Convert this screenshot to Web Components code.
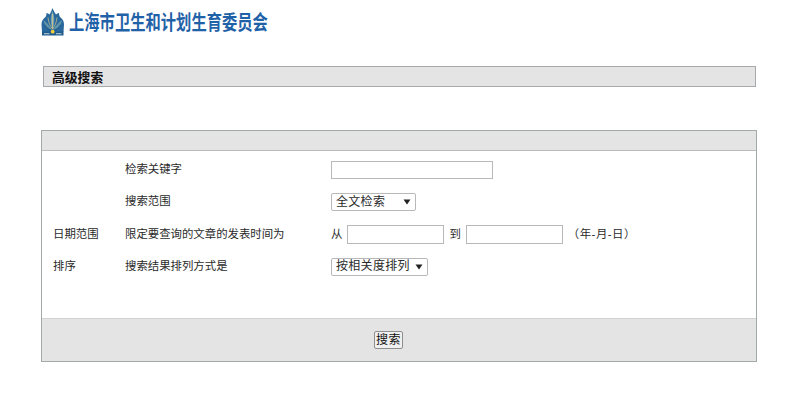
<!DOCTYPE html>
<html lang="zh">
<head>
<meta charset="utf-8">
<title>高级搜索</title>
<style>
  html, body {
    margin: 0;
    padding: 0;
    background: #fff;
    color: #2a2a2a;
    font: 11.4px/1.2 "Liberation Sans", "Noto Sans CJK SC", sans-serif;
  }
</style>
</head>
<body>
<site-header>上海市卫生和计划生育委员会</site-header>
<title-bar>高级搜索</title-bar>
<search-panel>
  <form-row desc="检索关键字"><text-box width="162" height="18"></text-box></form-row>
  <form-row desc="搜索范围"><drop-down width="85" gap="18">全文检索</drop-down></form-row>
  <form-row label="日期范围" desc="限定要查询的文章的发表时间为" row-height="33"><date-range></date-range></form-row>
  <form-row label="排序" desc="搜索结果排列方式是" row-height="31"><drop-down width="97" gap="5">按相关度排列</drop-down></form-row>
  <push-button slot="footer">搜索</push-button>
</search-panel>

<script>
class SiteHeader extends HTMLElement {
  constructor() {
    super();
    this.shadowDOM = this.attachShadow({mode: 'open'});
    this.shadowDOM.innerHTML = `
    <style>
      :host {
        display: flex;
        align-items: center;
        height: 44px;
        padding-left: 41px;
      }
      svg { display: block; width: 24px; height: 28px; flex: none; }
      .name {
        margin: 2px 0 0 4px;
        font-size: 20px;
        line-height: 26px;
        font-weight: 700;
        color: #1f62a8;
        white-space: nowrap;
        transform: scaleX(.765);
        transform-origin: left center;
      }
    </style>
    <svg viewBox="0 0 24 28" aria-hidden="true">
      <path d="M11.5 0 C12.5 3 14 5 15 6.5 C16 5.5 17 5 18 5 C18 7 18.5 8.5 19.5 9.5 C21.5 11 23 13 23 16.5 C23 19 22.5 21.5 22.5 24 L1 24 C1 21.5 0.5 19 0.5 16.5 C0.5 13 2 11 4 9.5 C5 8.5 5.5 7 5.5 5 C6.5 5 7.5 5.5 8.5 6.5 C9.5 5 10.5 3 11.5 0 Z" fill="#28689c"/>
      <path d="M11.5 3 C9.5 8 9 14 11.5 21 C14 14 13.5 8 11.5 3 Z" fill="#7aa6b4"/>
      <path d="M2.5 12 C3 17 6.5 21 11.5 22 C8 18 6 14.5 2.5 12 Z M21 12 C20.5 17 17 21 11.5 22 C15 18 17 14.5 21 12 Z" fill="#5f93a8"/>
      <path d="M11.5 6 V21 M7 9.5 C7.5 15 9.5 18.5 11.5 21 M16 9.5 C15.5 15 13.5 18.5 11.5 21" stroke="#d8c98a" stroke-width=".7" fill="none"/>
      <path d="M4 17 C6 21 9 22.5 11.5 22.5 C14 22.5 17 21 19.5 17" stroke="#1c4f80" stroke-width=".8" fill="none"/>
      <rect x="1" y="23.5" width="21.5" height="4" fill="#1f5c8e"/>
      <circle cx="11.7" cy="23.7" r="1.9" fill="#f0cd3c"/>
      <path d="M3 25.8 H8.5 M15 25.8 H20.5" stroke="#c3d3db" stroke-width="1.1"/>
    </svg>
    <div class="name"><slot></slot></div>
    `;
  }
}

class TitleBar extends HTMLElement {
  constructor() {
    super();
    this.shadowDOM = this.attachShadow({mode: 'open'});
    this.shadowDOM.innerHTML = `
    <style>
      :host {
        display: block;
        box-sizing: border-box;
        height: 21px;
        margin: 22px 44px 0 43px;
        padding: 2px 0 0 8px;
        background: #e4e4e4;
        border: 1px solid #a6aaad;
        font-size: 12.8px;
        line-height: 17px;
        font-weight: 700;
        color: #111;
      }
    </style>
    <slot></slot>
    `;
  }
}

class SearchPanel extends HTMLElement {
  constructor() {
    super();
    this.shadowDOM = this.attachShadow({mode: 'open'});
    this.shadowDOM.innerHTML = `
    <style>
      :host {
        display: block;
        box-sizing: border-box;
        margin: 43px 43px 0 41px;
        border: 1px solid #a3a8a8;
      }
      .head {
        height: 19px;
        background: #e4e4e4;
        border-bottom: 1px solid #b9bcbc;
      }
      .body {
        box-sizing: border-box;
        height: 167px;
        padding-top: 3px;
        background: #fff;
      }
      .foot {
        display: flex;
        justify-content: center;
        align-items: center;
        box-sizing: border-box;
        height: 43px;
        padding-right: 21px;
        background: #e4e4e4;
        border-top: 1px solid #d0d2d2;
      }
    </style>
    <div class="head"></div>
    <div class="body"><slot></slot></div>
    <div class="foot"><slot name="footer"></slot></div>
    `;
  }
}

class FormRow extends HTMLElement {
  constructor() {
    super();
    this.shadowDOM = this.attachShadow({mode: 'open'});
    const label = this.getAttribute('label') || '';
    const desc = this.getAttribute('desc') || '';
    const rowHeight = this.getAttribute('row-height') || 32;
    this.shadowDOM.innerHTML = `
    <style>
      :host {
        display: grid;
        grid-template-columns: 72px 206px 1fr;
        align-items: center;
        height: ${rowHeight}px;
        padding-left: 11px;
      }
      .field { display: flex; align-items: center; }
    </style>
    <div>${label}</div>
    <div>${desc}</div>
    <div class="field"><slot></slot></div>
    `;
  }
}

class TextBox extends HTMLElement {
  constructor() {
    super();
    this.shadowDOM = this.attachShadow({mode: 'open'});
    const w = this.getAttribute('width') || 97;
    const h = this.getAttribute('height') || 19;
    this.shadowDOM.innerHTML = `
    <style>
      :host { display: block; flex: none; }
      input {
        display: block;
        box-sizing: border-box;
        width: ${w}px;
        height: ${h}px;
        margin: 0;
        padding: 0 3px;
        background: #fff;
        border: 1px solid #b8b8b8;
        border-radius: 0;
        outline: none;
      }
    </style>
    <input type="text">
    `;
  }
}

class DropDown extends HTMLElement {
  constructor() {
    super();
    this.shadowDOM = this.attachShadow({mode: 'open'});
    const w = this.getAttribute('width') || 85;
    const gap = this.getAttribute('gap') || 4;
    this.shadowDOM.innerHTML = `
    <style>
      :host {
        display: flex;
        align-items: center;
        box-sizing: border-box;
        width: ${w}px;
        height: 18px;
        padding-left: 4px;
        flex: none;
        background: #fff;
        border: 1px solid #b8b8b8;
        border-radius: 2px;
        font-size: 12px;
        letter-spacing: .3px;
        white-space: nowrap;
      }
      svg { display: block; flex: none; width: 8px; height: 6px; margin-left: ${gap}px; }
    </style>
    <slot></slot>
    <svg viewBox="0 0 8 6" aria-hidden="true"><path d="M0.5 0.5 H7.5 L4 5.5 Z" fill="#222"/></svg>
    `;
  }
}

class DateRange extends HTMLElement {
  constructor() {
    super();
    this.shadowDOM = this.attachShadow({mode: 'open'});
    this.shadowDOM.innerHTML = `
    <style>
      :host {
        display: flex;
        align-items: center;
        white-space: nowrap;
      }
      .from { margin-right: 5px; }
      .to { margin: 0 5px; }
      .hint { margin-left: 5px; letter-spacing: .5px; }
    </style>
    <span class="from">从</span>
    <text-box width="97" height="19"></text-box>
    <span class="to">到</span>
    <text-box width="97" height="19"></text-box>
    <span class="hint">（年-月-日）</span>
    `;
  }
}

class PushButton extends HTMLElement {
  constructor() {
    super();
    this.shadowDOM = this.attachShadow({mode: 'open'});
    this.shadowDOM.innerHTML = `
    <style>
      :host { display: block; }
      button {
        display: block;
        box-sizing: border-box;
        width: 29px;
        height: 18px;
        margin: 0;
        padding: 0;
        background: #f0f0f0;
        border: 1px solid #8f8f8f;
        border-radius: 2px;
        font: inherit;
        font-size: 12px;
        letter-spacing: .5px;
        line-height: 16px;
        color: #111;
      }
    </style>
    <button type="button"><slot></slot></button>
    `;
  }
}

customElements.define('site-header', SiteHeader);
customElements.define('title-bar', TitleBar);
customElements.define('search-panel', SearchPanel);
customElements.define('form-row', FormRow);
customElements.define('text-box', TextBox);
customElements.define('drop-down', DropDown);
customElements.define('date-range', DateRange);
customElements.define('push-button', PushButton);
</script>
</body>
</html>
